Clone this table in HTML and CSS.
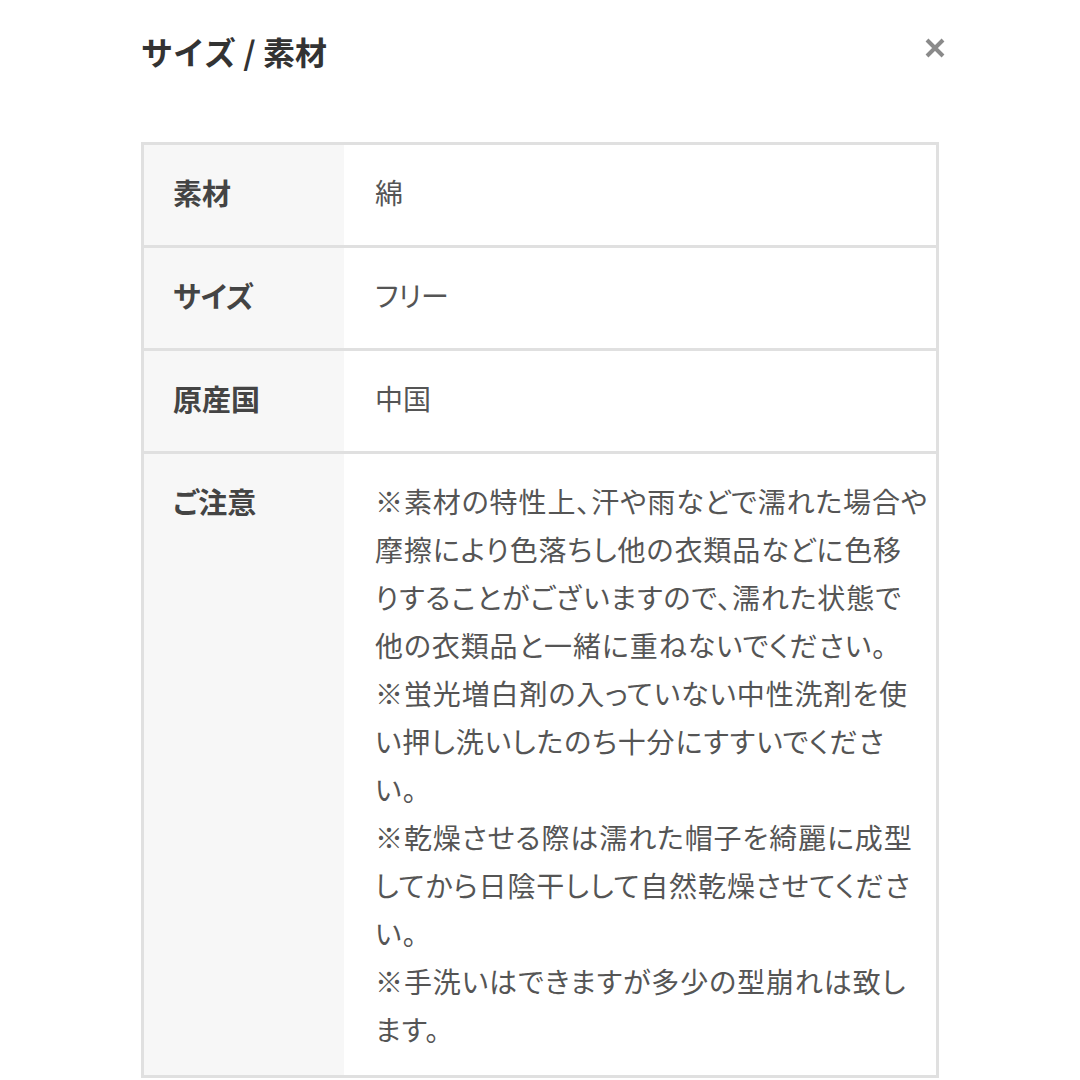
FILE: index.html
```html
<!DOCTYPE html>
<html lang="ja">
<head>
    <meta charset="UTF-8">
    <meta name="viewport" content="width=device-width, initial-scale=1.0">
    <title>サイズ / 素材</title>
    <link rel="stylesheet" href="styles.css">
</head>
<body>

    <div class="modal">
        <div class="modal-header">
            <h2 class="modal-title">サイズ / 素材</h2>
            <button class="close-btn" aria-label="閉じる">
                <svg width="20" height="20" viewBox="0 0 20 20">
                    <path d="M2 2 L18 18 M18 2 L2 18" stroke="#8a8a8a" stroke-width="4" fill="none"/>
                </svg>
            </button>
        </div>

        <table class="spec-table">
            <tr>
                <th>素材</th>
                <td>綿</td>
            </tr>
            <tr>
                <th>サイズ</th>
                <td>フリー</td>
            </tr>
            <tr>
                <th>原産国</th>
                <td>中国</td>
            </tr>
            <tr>
                <th>ご注意</th>
                <td class="note">※素材の特性上、汗や雨などで濡れた場合や<br>摩擦により色落ちし他の衣類品などに色移<br>りすることがございますので、濡れた状態で<br>他の衣類品と一緒に重ねないでください。<br>※蛍光増白剤の入っていない中性洗剤を使<br>い押し洗いしたのち十分にすすいでくださ<br>い。<br>※乾燥させる際は濡れた帽子を綺麗に成型<br>してから日陰干しして自然乾燥させてくださ<br>い。<br>※手洗いはできますが多少の型崩れは致し<br>ます。</td>
            </tr>
        </table>
    </div>

</body>
</html>
```

FILE: styles.css
```css
body {
    font-family: "Noto Sans CJK JP", "Noto Sans", sans-serif;
    background-color: #fff;
    margin: 0;
    color: #555;
}

.modal {
    width: 798px;
    margin: 0 auto;
}

.modal-header {
    display: flex;
    align-items: center;
    justify-content: space-between;
    height: 102px;
    margin-bottom: 40px;
}

.modal-title {
    margin: 0;
    font-size: 32px;
    font-weight: 700;
    color: #333;
}

.close-btn {
    border: none;
    background: none;
    padding: 0;
    margin-right: -6px;
    width: 20px;
    height: 20px;
    cursor: pointer;
    display: flex;
    margin-bottom: 6px;
}

.spec-table {
    width: 798px;
    border-collapse: collapse;
    table-layout: fixed;
    border: 3px solid #e0e0e0;
    font-size: 28px;
    line-height: 48px;
    font-feature-settings: "palt";
}

.spec-table tr {
    border-bottom: 3px solid #e0e0e0;
}

.spec-table th {
    width: 143px;
    padding: 23px 28px 29px 29px;
    background-color: #f7f7f7;
    text-align: left;
    vertical-align: top;
    font-size: 29px;
    font-weight: 700;
    color: #444;
}

.spec-table td {
    padding: 23px 0 29px 31px;
    vertical-align: top;
    color: #555;
}

.spec-table td.note {
    padding-bottom: 22px;
    letter-spacing: 0.9px;
    white-space: nowrap;
}
```
